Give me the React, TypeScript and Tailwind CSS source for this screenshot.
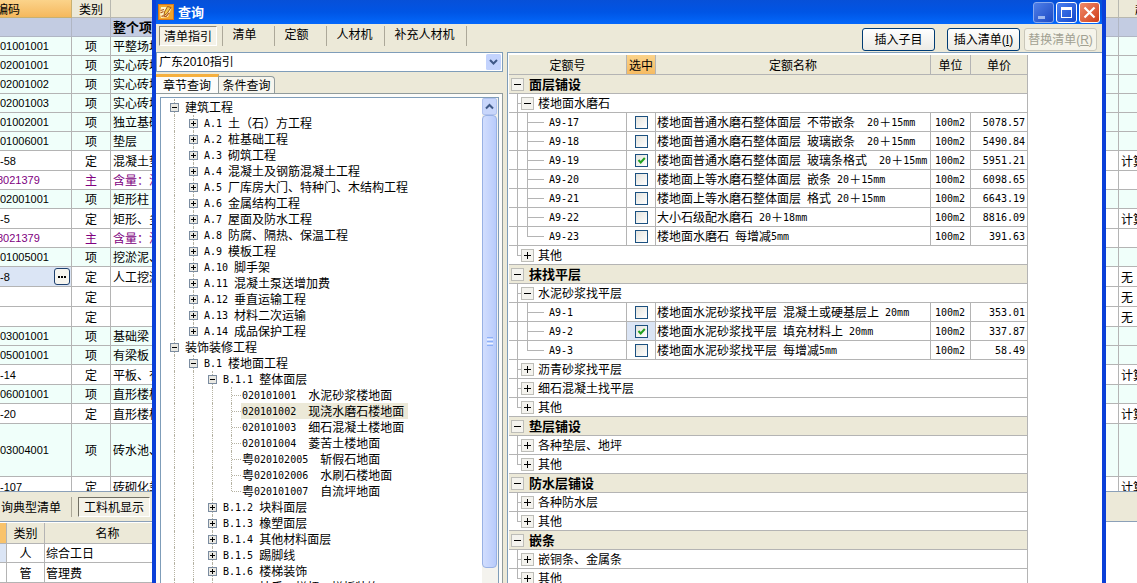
import React, { useState } from 'react';

type BillRow = {
  code: string;
  kind: string;
  name: string;
  note?: string;
  height?: string;
  editing?: boolean;
};

const billRows: BillRow[] = [
  { code: '01001001', kind: '项', name: '平整场地' },
  { code: '02001001', kind: '项', name: '实心砖墙' },
  { code: '02001002', kind: '项', name: '实心砖墙' },
  { code: '02001003', kind: '项', name: '实心砖墙' },
  { code: '01002001', kind: '项', name: '独立基础' },
  { code: '01006001', kind: '项', name: '垫层' },
  { code: '-58', kind: '定', name: '混凝土垫层', note: '计算' },
  { code: '8021379', kind: '主', name: '含量：混凝土' },
  { code: '02001001', kind: '项', name: '矩形柱' },
  { code: '-5', kind: '定', name: '矩形、多边形', note: '计算' },
  { code: '8021379', kind: '主', name: '含量：混凝土' },
  { code: '01005001', kind: '项', name: '挖淤泥、流砂' },
  { code: '-8', kind: '定', name: '人工挖淤泥', note: '无', editing: true },
  { code: '', kind: '定', name: '', note: '无' },
  { code: '', kind: '定', name: '', note: '无' },
  { code: '03001001', kind: '项', name: '基础梁' },
  { code: '05001001', kind: '项', name: '有梁板' },
  { code: '-14', kind: '定', name: '平板、有梁板', note: '计算' },
  { code: '06001001', kind: '项', name: '直形楼梯' },
  { code: '-20', kind: '定', name: '直形楼梯', note: '计算' },
  { code: '03004001', kind: '项', name: '砖水池、化粪池', height: 'h-[53px]' },
  { code: '-107', kind: '定', name: '砖砌化粪池', note: '计算' },
];

type TreeNode = {
  label: string;
  level: number;
  state: 'open' | 'closed' | 'leaf';
  selected?: boolean;
  last?: boolean;
};

const treeNodes: TreeNode[] = [
  { label: '建筑工程', level: 0, state: 'open' },
  { label: 'A.1 土（石）方工程', level: 1, state: 'closed' },
  { label: 'A.2 桩基础工程', level: 1, state: 'closed' },
  { label: 'A.3 砌筑工程', level: 1, state: 'closed' },
  { label: 'A.4 混凝土及钢筋混凝土工程', level: 1, state: 'closed' },
  { label: 'A.5 厂库房大门、特种门、木结构工程', level: 1, state: 'closed' },
  { label: 'A.6 金属结构工程', level: 1, state: 'closed' },
  { label: 'A.7 屋面及防水工程', level: 1, state: 'closed' },
  { label: 'A.8 防腐、隔热、保温工程', level: 1, state: 'closed' },
  { label: 'A.9 模板工程', level: 1, state: 'closed' },
  { label: 'A.10 脚手架', level: 1, state: 'closed' },
  { label: 'A.11 混凝土泵送增加费', level: 1, state: 'closed' },
  { label: 'A.12 垂直运输工程', level: 1, state: 'closed' },
  { label: 'A.13 材料二次运输', level: 1, state: 'closed' },
  { label: 'A.14 成品保护工程', level: 1, state: 'closed', last: true },
  { label: '装饰装修工程', level: 0, state: 'open' },
  { label: 'B.1 楼地面工程', level: 1, state: 'open' },
  { label: 'B.1.1 整体面层', level: 2, state: 'open' },
  { label: '020101001  水泥砂浆楼地面', level: 3, state: 'leaf' },
  { label: '020101002  现浇水磨石楼地面', level: 3, state: 'leaf', selected: true },
  { label: '020101003  细石混凝土楼地面', level: 3, state: 'leaf' },
  { label: '020101004  菱苦土楼地面', level: 3, state: 'leaf' },
  { label: '粤020102005  斩假石地面', level: 3, state: 'leaf' },
  { label: '粤020102006  水刷石楼地面', level: 3, state: 'leaf' },
  { label: '粤020101007  自流坪地面', level: 3, state: 'leaf', last: true },
  { label: 'B.1.2 块料面层', level: 2, state: 'closed' },
  { label: 'B.1.3 橡塑面层', level: 2, state: 'closed' },
  { label: 'B.1.4 其他材料面层', level: 2, state: 'closed' },
  { label: 'B.1.5 踢脚线', level: 2, state: 'closed' },
  { label: 'B.1.6 楼梯装饰', level: 2, state: 'closed' },
  { label: 'B.1.7 扶手、栏杆、栏板装饰', level: 2, state: 'closed' },
];

type QuotaRow =
  | { type: 'group'; label: string }
  | { type: 'sub'; label: string; open?: boolean; last?: boolean }
  | {
      type: 'item';
      code: string;
      name: string;
      price: string;
      checked?: boolean;
      active?: boolean;
      last?: boolean;
    };

const quotaRows: QuotaRow[] = [
  { type: 'group', label: '面层铺设' },
  { type: 'sub', label: '楼地面水磨石', open: true },
  { type: 'item', code: 'A9-17', name: '楼地面普通水磨石整体面层 不带嵌条  20＋15mm', price: '5078.57' },
  { type: 'item', code: 'A9-18', name: '楼地面普通水磨石整体面层 玻璃嵌条  20＋15mm', price: '5490.84' },
  { type: 'item', code: 'A9-19', name: '楼地面普通水磨石整体面层 玻璃条格式  20＋15mm', price: '5951.21', checked: true },
  { type: 'item', code: 'A9-20', name: '楼地面上等水磨石整体面层 嵌条 20＋15mm', price: '6098.65' },
  { type: 'item', code: 'A9-21', name: '楼地面上等水磨石整体面层 格式 20＋15mm', price: '6643.19' },
  { type: 'item', code: 'A9-22', name: '大小石级配水磨石 20＋18mm', price: '8816.09' },
  { type: 'item', code: 'A9-23', name: '楼地面水磨石 每增减5mm', price: '391.63', last: true },
  { type: 'sub', label: '其他', last: true },
  { type: 'group', label: '抹找平层' },
  { type: 'sub', label: '水泥砂浆找平层', open: true },
  { type: 'item', code: 'A9-1', name: '楼地面水泥砂浆找平层 混凝土或硬基层上 20mm', price: '353.01' },
  { type: 'item', code: 'A9-2', name: '楼地面水泥砂浆找平层 填充材料上 20mm', price: '337.87', checked: true, active: true },
  { type: 'item', code: 'A9-3', name: '楼地面水泥砂浆找平层 每增减5mm', price: '58.49', last: true },
  { type: 'sub', label: '沥青砂浆找平层' },
  { type: 'sub', label: '细石混凝土找平层' },
  { type: 'sub', label: '其他', last: true },
  { type: 'group', label: '垫层铺设' },
  { type: 'sub', label: '各种垫层、地坪' },
  { type: 'sub', label: '其他', last: true },
  { type: 'group', label: '防水层铺设' },
  { type: 'sub', label: '各种防水层' },
  { type: 'sub', label: '其他', last: true },
  { type: 'group', label: '嵌条' },
  { type: 'sub', label: '嵌铜条、金属条' },
  { type: 'sub', label: '其他', last: true },
];

// Latin runs use a half-width mono face next to the full-width characters
const Mixed: React.FC<{ text: string }> = ({ text }) => (
  <>
    {text.split(/([\x20-\x7e]+)/).map((part, i) =>
      i % 2 === 1 ? (
        <span key={i} className="align-[1px] font-['DejaVu_Sans_Mono',monospace] text-[10px] leading-none">
          {part}
        </span>
      ) : (
        part
      )
    )}
  </>
);

const rowColor = (kind: string) => (kind === '项' ? 'bg-[#f0fffa]' : 'bg-white');

const BillTable: React.FC = () => (
  <table className="-ml-1 w-[calc(100%+4px)] table-fixed border-separate border-spacing-0">
    <colgroup>
      <col className="w-[76px]" />
      <col className="w-[39px]" />
      <col />
      <col className="w-[18px]" />
    </colgroup>
    <thead>
      <tr className="h-[18px] bg-[#ece9d8]">
        <th className="border-r border-b border-[#c8b070] bg-linear-to-b from-[#fbd38a] to-[#f5b85c] p-0 text-left font-normal">编码</th>
        <th className="border-r border-b border-[#b8b8b0] p-0 font-normal">类别</th>
        <th className="border-r border-b border-[#b8b8b0] p-0 font-normal">名称</th>
        <th className="overflow-hidden border-b border-[#b8b8b0] p-0 pl-4 text-left font-normal">超高</th>
      </tr>
    </thead>
    <tbody>
      <tr className="h-[19px] bg-[#c3cce2]">
        <td className="border-r border-b border-[#b0b6c4] p-0"></td>
        <td className="border-r border-b border-[#b0b6c4] p-0"></td>
        <td className="border-r border-b border-[#b0b6c4] p-0 pl-0.5 text-[13px] font-bold">整个项目</td>
        <td className="border-b border-[#b0b6c4] p-0"></td>
      </tr>
      {billRows.map((row, i) => (
        <tr
          key={i}
          className={`${row.height ?? (row.kind === '定' ? 'h-5' : 'h-[19px]')} ${rowColor(row.kind)} ${
            row.kind === '主' ? 'text-[#800080]' : ''
          }`}
        >
          <td
            className={`border-r border-b border-[#b4b4b4] p-0 ${row.kind === '主' ? 'pl-px' : 'pl-1'} ${
              row.editing ? 'bg-[#dbe5f5]' : ''
            }`}
          >
            <div className="flex items-center justify-between font-['Liberation_Sans',sans-serif] text-[11px]">
              {row.code}
              {row.editing && (
                <button
                  aria-label="选择编码"
                  className="mr-px flex h-[17px] w-4 items-center justify-center gap-px rounded-[3px] border border-[#1c3f6e] bg-[#f6f5ef]"
                >
                  <span className="size-0.5 bg-black"></span>
                  <span className="size-0.5 bg-black"></span>
                  <span className="size-0.5 bg-black"></span>
                </button>
              )}
            </div>
          </td>
          <td className="border-r border-b border-[#b4b4b4] p-0 text-center">{row.kind}</td>
          <td className="overflow-hidden border-r border-b border-[#b4b4b4] p-0 pl-0.5">{row.name}</td>
          <td className="overflow-hidden border-b border-[#b4b4b4] p-0 pl-0.5">{row.note}</td>
        </tr>
      ))}
    </tbody>
  </table>
);

const DetailPanel: React.FC = () => (
  <section className="flex-none bg-white">
    <div className="flex h-[31px] items-center border-y border-[#8ba0b8] bg-[#ece9d8] pl-px">
      <button className="h-5">询典型清单</button>
      <span className="ml-2.5 h-5 w-px bg-[#aca899]"></span>
      <button className="ml-1.5 h-5 w-[72px] border border-t-[#716f64] border-l-[#716f64] border-r-white border-b-white bg-[#f4f2e8]">
        工料机显示
      </button>
    </div>
    <table className="mt-px w-[171px] table-fixed border-separate border-spacing-0">
      <colgroup>
        <col className="w-[7px]" />
        <col className="w-[38px]" />
        <col />
      </colgroup>
      <thead>
        <tr className="h-[21px] bg-[#ece9d8]">
          <th className="border-r border-b border-[#b4b4b4] bg-[#f9c36b] p-0"></th>
          <th className="border-r border-b border-[#b4b4b4] p-0 font-normal">类别</th>
          <th className="border-r border-b border-[#b4b4b4] p-0 font-normal">名称</th>
        </tr>
      </thead>
      <tbody>
        <tr className="h-[19px]">
          <td className="border-r border-b border-[#b4b4b4] bg-[#dbe5f5] p-0"></td>
          <td className="border-r border-b border-[#b4b4b4] p-0 text-center">人</td>
          <td className="border-r border-b border-[#b4b4b4] p-0 pl-px">综合工日</td>
        </tr>
        <tr className="h-5">
          <td className="border-r border-b border-[#b4b4b4] p-0"></td>
          <td className="border-r border-b border-[#b4b4b4] p-0 text-center">管</td>
          <td className="border-r border-b border-[#b4b4b4] p-0 pl-px">管理费</td>
        </tr>
      </tbody>
    </table>
  </section>
);

const AppLogo: React.FC = () => (
  <svg width="16" height="16" viewBox="0 0 16 16" aria-hidden="true">
    <rect width="16" height="16" fill="#d9791a" />
    <rect x="1" y="1" width="14" height="14" fill="#f3a52a" />
    <path d="M3 3h9l1 2-3 8-7 1-1-4z" fill="#fff3c4" />
    <path d="M9.500 2.500l3.500 1-4 6-3 2 0.500-3.500z" fill="#f6c84a" stroke="#a85a16" strokeWidth="1" />
    <path d="M2.500 6.500l3.500-1M2.500 9l3-1.500M3.500 12.500c2-2 3.500 1 5-0.500s1.500-2.500 3-3" fill="none" stroke="#b4581a" strokeWidth="1.200" />
  </svg>
);

const TitleBar: React.FC = () => (
  <header className="flex h-6 flex-none items-center bg-linear-to-b from-[#0750d8] via-[#0055e5] to-[#0468fb] pr-0.5 pl-0.5 text-white">
    <AppLogo />
    <h1 className="ml-1 flex-1 text-[13px] font-bold">查询</h1>
    <div className="flex gap-0.5">
      <button aria-label="最小化" className="rounded-[3px] border border-[#86a8ee] bg-linear-to-br from-[#4f7fe8] to-[#1d49c4]">
        <svg width="19" height="19" viewBox="0 0 19 19" aria-hidden="true">
          <rect x="4" y="13" width="7" height="3" fill="#9db8f0" />
        </svg>
      </button>
      <button aria-label="最大化" className="rounded-[3px] border border-white bg-linear-to-br from-[#4a7ff0] to-[#1547cc]">
        <svg width="19" height="19" viewBox="0 0 19 19" aria-hidden="true">
          <rect x="4.500" y="5.500" width="10" height="9" fill="none" stroke="#fff" />
          <rect x="4" y="4" width="11" height="3" fill="#fff" />
        </svg>
      </button>
      <button aria-label="关闭" className="rounded-[3px] border border-white bg-linear-to-br from-[#f08a68] to-[#cf3a12]">
        <svg width="19" height="19" viewBox="0 0 19 19" aria-hidden="true">
          <path d="M4.500 4.500l10 10M14.500 4.500l-10 10" stroke="#fff" strokeWidth="2.200" />
        </svg>
      </button>
    </div>
  </header>
);

const Toolbar: React.FC = () => {
  const [page, setPage] = useState('清单指引');
  const pages = [
    { label: '清单', width: 'w-[52px] pr-2' },
    { label: '定额', width: 'w-[52px] pr-2' },
    { label: '人材机', width: 'w-[58px] pr-0.5' },
    { label: '补充人材机', width: 'w-[82px] pr-0.5' },
  ];

  return (
    <div className="flex h-7 flex-none items-start pt-0.5">
      <nav className="flex flex-1 pl-[3px]">
        <button
          onClick={() => setPage('清单指引')}
          className="mr-[5px] h-5 w-[58px] border border-t-[#8a8778] border-l-[#8a8778] border-r-white border-b-white bg-[#f4f2e8]"
        >
          清单指引
        </button>
        {pages.map((item) => (
          <button
            key={item.label}
            onClick={() => setPage(item.label)}
            aria-pressed={page === item.label}
            className={`h-5 border-l border-[#aca899] pb-1 ${item.width}`}
          >
            {item.label}
          </button>
        ))}
        <span className="h-5 w-px bg-[#aca899]"></span>
      </nav>
      <div className="flex pt-0.5 pr-[5px] font-['Liberation_Sans','Noto_Sans_CJK_SC',sans-serif]">
        <button className="h-[23px] w-[73px] rounded-[3px] border border-[#003c74] bg-linear-to-b from-white to-[#ecebe5]">
          插入子目
        </button>
        <button className="ml-3 h-[23px] w-[73px] rounded-[3px] border border-[#003c74] bg-linear-to-b from-white to-[#ecebe5]">
          插入清单(<u>I</u>)
        </button>
        <button
          disabled
          className="ml-1 h-[23px] w-[73px] rounded-[3px] border border-[#c9c7ba] bg-[#f5f4ea] text-[#a1a192]"
        >
          替换清单(<u>R</u>)
        </button>
      </div>
    </div>
  );
};

const Expander: React.FC<{ open: boolean }> = ({ open }) => (
  <svg width="9" height="9" viewBox="0 0 9 9" aria-hidden="true" className="flex-none">
    <rect x="0.500" y="0.500" width="8" height="8" fill="#e9e8e2" stroke="#7b8ca0" />
    <path d={open ? 'M2 4.500h5' : 'M2 4.500h5M4.500 2v5'} stroke="#000" />
  </svg>
);

const TreeItem: React.FC<{ node: TreeNode }> = ({ node }) => (
  <li className="flex h-4 items-center whitespace-pre">
    {Array.from({ length: node.level }, (_, i) => (
      <span key={i} className="flex h-4 w-[19px] flex-none justify-center">
        <span className="border-l border-dotted border-[#b5b2a2]"></span>
      </span>
    ))}
    {node.state === 'leaf' ? (
      <span className="flex h-4 w-[19px] flex-none items-start">
        <span className={`ml-[9px] border-l border-dotted border-[#b5b2a2] ${node.last ? 'h-2' : 'h-4'}`}></span>
        <span className="mt-2 flex-1 border-t border-dotted border-[#b5b2a2]"></span>
      </span>
    ) : (
      <span className="flex h-4 w-[19px] flex-none flex-col items-center">
        <span className="h-1 border-l border-dotted border-[#b5b2a2]"></span>
        <Expander open={node.state === 'open'} />
        <span className={`h-[3px] ${node.last ? '' : 'border-l border-dotted border-[#b5b2a2]'}`}></span>
      </span>
    )}
    <span className={`pr-1 pl-px leading-4 ${node.selected ? 'bg-[#ece9d8]' : ''}`}>
      <Mixed text={node.label} />
    </span>
  </li>
);

const ChapterPanel: React.FC = () => (
  <div className="flex w-[347px] flex-none flex-col">
    <div className="relative flex flex-none">
      <select
        aria-label="指引"
        className="h-5 w-full appearance-none border border-[#7f9db9] bg-white pl-0.5 font-['Liberation_Sans','Noto_Sans_CJK_SC',sans-serif] text-xs leading-none"
      >
        <option>广东2010指引</option>
      </select>
      <svg width="15" height="16" viewBox="0 0 15 16" aria-hidden="true" className="pointer-events-none absolute top-0.5 right-0.5">
        <rect width="15" height="16" rx="1.500" fill="#c3d3fd" />
        <path d="M4 6l3.500 3.500L11 6" fill="none" stroke="#3f5987" strokeWidth="2" />
      </svg>
    </div>
    <div className="flex h-[22px] flex-none items-end border-b border-[#919b9c] pt-0.5">
      <button className="-mb-px h-full w-[63px] self-stretch border-t-[3px] border-r border-[#919b9c] border-t-[#f5b040] bg-[#fcfcfa]">
        章节查询
      </button>
      <button className="h-[17px] w-14 rounded-tr-sm border-t border-r border-[#919b9c] bg-[#f6f5ee]">条件查询</button>
    </div>
    <div className="flex min-h-0 flex-1 border-r border-[#919b9c] bg-[#fcfcfa] pt-[3px] pr-[3px] pl-1">
      <div className="flex min-h-0 flex-1 overflow-hidden border-x border-t border-[#7f9db9] bg-white">
        <ul className="flex-1 pt-px pl-1">
          {treeNodes.map((node) => (
            <TreeItem key={node.label} node={node} />
          ))}
        </ul>
        <div className="flex w-4 flex-none flex-col bg-[#f4f3ee]">
          <svg width="15" height="17" viewBox="0 0 15 17" aria-hidden="true" className="flex-none">
            <rect x="0.500" y="0.500" width="14" height="16" rx="1.500" fill="#c8d6fb" stroke="#b0c2ee" />
            <path d="M4 10.500L7.500 7l3.500 3.500" fill="none" stroke="#3f5987" strokeWidth="2" />
          </svg>
          <div className="mb-[15px] flex w-[15px] flex-1 flex-col items-center justify-center gap-px rounded-sm border border-[#98b1e4] bg-linear-to-r from-[#d2defe] to-[#b8cbfb]">
            <span className="h-px w-1.5 bg-[#8cb0f8]"></span>
            <span className="h-px w-1.5 bg-[#eef4fe]"></span>
            <span className="h-px w-1.5 bg-[#8cb0f8]"></span>
            <span className="h-px w-1.5 bg-[#eef4fe]"></span>
            <span className="h-px w-1.5 bg-[#8cb0f8]"></span>
          </div>
        </div>
      </div>
    </div>
  </div>
);

const GroupToggle: React.FC<{ open: boolean }> = ({ open }) => (
  <svg width="13" height="13" viewBox="0 0 13 13" aria-hidden="true" className="flex-none">
    <rect x="0.500" y="0.500" width="12" height="12" fill="#f4f3ee" stroke="#bdbdb8" />
    <path d={open ? 'M3 6.500h7' : 'M3 6.500h7M6.500 3v7'} stroke="#000" />
  </svg>
);

const QuotaItem: React.FC<{ row: QuotaRow }> = ({ row }) => {
  if (row.type === 'group') {
    return (
      <tr className="h-[19px] bg-[#ece9d8]">
        <td colSpan={5} className="border-r border-b border-[#b4b4b4] p-0 pl-0.5">
          <div className="flex items-center gap-[5px] text-[13px] leading-[18px] font-bold">
            <GroupToggle open />
            {row.label}
          </div>
        </td>
      </tr>
    );
  }

  if (row.type === 'sub') {
    return (
      <tr className="h-[19px]">
        <td colSpan={5} className="border-r border-b border-[#b4b4b4] p-0 pl-2">
          <div className="flex h-[18px] items-center leading-[18px]">
            <span className="flex h-[18px] w-1 items-start">
              <span className={`w-px bg-[#b4b4b4] ${row.last ? 'h-2.5' : 'h-[18px]'}`}></span>
              <span className="mt-[9px] h-px flex-1 bg-[#b4b4b4]"></span>
            </span>
            <GroupToggle open={!!row.open} />
            <span className="pl-1">{row.label}</span>
          </div>
        </td>
      </tr>
    );
  }

  return (
    <tr className="h-[19px]">
      <td className="border-r border-b border-[#b4b4b4] p-0 pl-2">
        <div className="flex h-[18px] items-center leading-[18px]">
          <span className="h-[18px] w-px bg-[#b4b4b4]"></span>
          <span className="ml-[9px] flex h-[18px] w-[17px] items-start">
            <span className={`w-px bg-[#b4b4b4] ${row.last ? 'h-2.5' : 'h-[18px]'}`}></span>
            <span className="mt-[9px] h-px flex-1 bg-[#b4b4b4]"></span>
          </span>
          <span className="pl-[5px]">
            <Mixed text={row.code} />
          </span>
        </div>
      </td>
      <td className={`border-r border-b border-[#b4b4b4] p-0 ${row.active ? 'bg-[#dbe5f5]' : ''}`}>
        <label className="flex justify-center">
          <span className="relative flex">
            <input
              type="checkbox"
              defaultChecked={row.checked}
              aria-label={row.code}
              className="peer size-[13px] appearance-none border border-[#1c5180] bg-linear-to-br from-[#e4e3dd] to-white"
            />
            <svg
              width="13"
              height="13"
              viewBox="0 0 13 13"
              aria-hidden="true"
              className="pointer-events-none absolute inset-0 hidden peer-checked:block"
            >
              <path d="M3.500 6l2.200 2.500L9.800 4" fill="none" stroke="#21a121" strokeWidth="2" />
            </svg>
          </span>
        </label>
      </td>
      <td className="overflow-hidden border-r border-b border-[#b4b4b4] p-0 pl-px whitespace-pre">
        <Mixed text={row.name} />
      </td>
      <td className="border-r border-b border-[#b4b4b4] p-0 pl-1">
        <Mixed text="100m2" />
      </td>
      <td className="border-r border-b border-[#b4b4b4] p-0 pr-0.5 text-right">
        <Mixed text={row.price} />
      </td>
    </tr>
  );
};

const QuotaPanel: React.FC = () => (
  <div className="ml-1 min-w-0 flex-1 overflow-hidden border-t border-l border-[#7f9db9] bg-white pt-0.5 pr-[74px] pl-px">
    <table className="w-full table-fixed border-separate border-spacing-0 leading-4">
      <colgroup>
        <col className="w-[118px]" />
        <col className="w-[29px]" />
        <col />
        <col className="w-10" />
        <col className="w-[57px]" />
      </colgroup>
      <thead>
        <tr className="h-5 bg-[#ece9d8]">
          <th className="border-r border-b border-[#b4b4b4] p-0 font-normal">定额号</th>
          <th className="border-r border-b border-[#b4b4b4] bg-linear-to-b from-[#fbd38a] to-[#f5bb62] p-0 font-normal">选中</th>
          <th className="border-r border-b border-[#b4b4b4] p-0 font-normal">定额名称</th>
          <th className="border-r border-b border-[#b4b4b4] p-0 font-normal">单位</th>
          <th className="border-r border-b border-[#b4b4b4] p-0 font-normal">单价</th>
        </tr>
      </thead>
      <tbody>
        {quotaRows.map((row, i) => (
          <QuotaItem key={i} row={row} />
        ))}
      </tbody>
    </table>
  </div>
);

const QueryDialog: React.FC = () => (
  <div
    role="dialog"
    aria-label="查询"
    className="absolute inset-y-0 right-[31px] left-[152px] flex flex-col border-x-4 border-[#0a3fd8] bg-[#ece9d8]"
  >
    <TitleBar />
    <Toolbar />
    <div className="flex min-h-0 flex-1">
      <ChapterPanel />
      <QuotaPanel />
    </div>
  </div>
);

const App: React.FC = () => {
  return (
    <div className="relative flex h-screen flex-col overflow-hidden bg-white font-['Noto_Sans_CJK_SC',sans-serif] text-xs leading-4 whitespace-nowrap text-black">
      <div className="min-h-0 flex-1 overflow-hidden">
        <BillTable />
      </div>
      <DetailPanel />
      <QueryDialog />
    </div>
  );
};

export default App;
